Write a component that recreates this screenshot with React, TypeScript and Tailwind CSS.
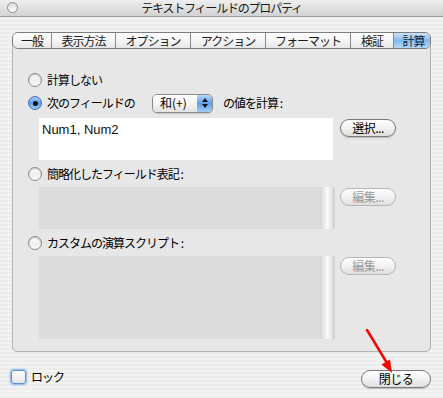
const jp = "font-['Noto_Sans_CJK_JP','Noto_Sans',sans-serif]"

const tabs = [
  { label: '一般', w: 'w-[38px]' },
  { label: '表示方法', w: 'w-[64px]' },
  { label: 'オプション', w: 'w-[75px]' },
  { label: 'アクション', w: 'w-[75px]' },
  { label: 'フォーマット', w: 'w-[85px]' },
  { label: '検証', w: 'w-[43px]' },
  { label: '計算', w: 'w-[40px]', active: true },
]

function Radio({ checked }: { checked?: boolean }) {
  return checked ? (
    <div className="flex h-[14px] w-[14px] shrink-0 items-center justify-center rounded-full border border-[#3f6fb0] bg-gradient-to-b from-[#a9cdf3] via-[#5f9fe6] to-[#9ccaf6]">
      <div className="h-[5px] w-[5px] rounded-full bg-[#111]" />
    </div>
  ) : (
    <div className="h-[14px] w-[14px] shrink-0 rounded-full border border-[#8a8a8a] bg-gradient-to-b from-[#ffffff] via-[#eeeeee] to-[#fafafa] shadow-[inset_0_1px_1px_rgba(0,0,0,0.25)]" />
  )
}

function PillButton({ label, disabled, w }: { label: string; disabled?: boolean; w: string }) {
  return (
    <div
      className={`flex h-[18px] ${w} items-center justify-center rounded-full border bg-gradient-to-b from-[#ffffff] via-[#f2f2f2] to-[#dedede] text-[12px] tracking-[-0.5px] ${
        disabled ? 'border-[#b5b5b5] text-[#9a9a9a]' : 'border-[#7a7a7a] text-black shadow-[0_1px_1px_rgba(0,0,0,0.2)]'
      }`}
    >
      {label}
    </div>
  )
}

export default function App() {
  return (
    <div className={`relative h-[398px] w-[443px] overflow-hidden ${jp}`}>
      {/* title bar */}
      <div className="relative flex h-[17px] items-center justify-center border-b border-[#9c9c9c] bg-gradient-to-b from-[#efefef] to-[#d2d2d2]">
        <div className="absolute left-[7px] top-[2px] h-[11px] w-[11px] rounded-full border border-[#8c8c8c] bg-gradient-to-b from-[#d8d8d8] to-[#ffffff]" />
        <span className="text-[12px] leading-none tracking-[-1.2px] text-[#1a1a1a]">テキストフィールドのプロパティ</span>
      </div>

      <div className="flex h-[381px] flex-col bg-[repeating-linear-gradient(0deg,#ececec_0px,#ececec_2px,#f3f3f3_2px,#f3f3f3_4px)] px-[12px] pt-[15px]">
        {/* tabs */}
        <div className="relative z-10 -mb-[8px] flex h-[17px] overflow-hidden rounded-[6px] border border-[#7d7d7d]">
          {tabs.map((t, i) => (
            <div
              key={t.label}
              className={`flex ${t.w} shrink-0 items-center justify-center text-[12px] leading-none tracking-[-1px] ${
                i > 0 ? 'border-l border-[#8a8a8a]' : ''
              } ${
                t.active
                  ? 'bg-gradient-to-b from-[#cfe3f8] via-[#86b9ee] to-[#b4d6f7] text-[#0b1d36]'
                  : 'bg-gradient-to-b from-[#ffffff] via-[#f5f5f5] to-[#e6e6e6] text-[#1a1a1a]'
              }`}
            >
              {t.label}
            </div>
          ))}
        </div>

        {/* panel */}
        <div className="flex h-[311px] w-[419px] flex-col rounded-[5px] border border-[#b3b3b3] bg-[#e7e7e7] pl-[15px]">
          <div className="mt-[31px] flex h-[14px] items-center gap-[5px]">
            <Radio />
            <span className="text-[12px] tracking-[-1px]">計算しない</span>
          </div>

          <div className="mt-[6px] flex h-[20px] items-center">
            <Radio checked />
            <span className="ml-[5px] w-[105px] text-[12px] tracking-[-1px]">次のフィールドの</span>
            <div className="flex h-[19px] w-[61px] overflow-hidden rounded-[5px] border border-[#8a8a8a] shadow-[0_1px_1px_rgba(0,0,0,0.15)]">
              <div className="flex flex-1 items-center bg-gradient-to-b from-[#ffffff] via-[#f4f4f4] to-[#e2e2e2] pl-[7px] text-[12px]">
                和(+)
              </div>
              <div className="flex w-[15px] flex-col items-center justify-center gap-[2px] bg-gradient-to-b from-[#b8d6f6] via-[#5f9fe6] to-[#a5ccf4]">
                <svg width="6" height="4" viewBox="0 0 6 4"><path d="M3 0 L6 4 L0 4 Z" fill="#111" /></svg>
                <svg width="6" height="4" viewBox="0 0 6 4"><path d="M0 0 L6 0 L3 4 Z" fill="#111" /></svg>
              </div>
            </div>
            <span className="ml-[10px] text-[12px] tracking-[-1px]">の値を計算 :</span>
          </div>

          <div className="mt-[5px] flex items-start">
            <div className="ml-[11px] h-[42px] w-[294px] bg-white px-[3px] pt-[2px] font-['Liberation_Sans',sans-serif] text-[13px] text-[#111]">
              Num1, Num2
            </div>
            <div className="ml-[7px] mt-[1px]">
              <PillButton label="選択..." w="w-[56px]" />
            </div>
          </div>

          <div className="mt-[7px] flex h-[14px] items-center gap-[5px]">
            <Radio />
            <span className="text-[12px] tracking-[-1px]">簡略化したフィールド表記 :</span>
          </div>

          <div className="mt-[6px] flex items-start">
            <div className="ml-[11px] flex h-[42px] w-[296px]">
              <div className="flex-1 bg-[#dcdcdc]" />
              <div className="w-[15px] bg-gradient-to-r from-[#d6d6d6] via-[#fbfbfb] to-[#cdcdcd]" />
            </div>
            <div className="ml-[5px] mt-[1px]">
              <PillButton label="編集..." w="w-[56px]" disabled />
            </div>
          </div>

          <div className="mt-[7px] flex h-[14px] items-center gap-[5px]">
            <Radio />
            <span className="text-[12px] tracking-[-1px]">カスタムの演算スクリプト :</span>
          </div>

          <div className="mt-[6px] flex items-start">
            <div className="ml-[11px] flex h-[83px] w-[296px]">
              <div className="flex-1 bg-[#dcdcdc]" />
              <div className="w-[15px] bg-gradient-to-r from-[#d6d6d6] via-[#fbfbfb] to-[#cdcdcd]" />
            </div>
            <div className="ml-[5px] mt-[1px]">
              <PillButton label="編集..." w="w-[56px]" disabled />
            </div>
          </div>
        </div>

        {/* footer */}
        <div className="mt-[16px] flex items-start justify-between">
          <div className="-ml-[1px] flex items-center gap-[5px]">
            <div className="h-[14px] w-[15px] rounded-[3px] border border-[#5d8fd0] bg-gradient-to-b from-[#ffffff] to-[#e4e4e4] shadow-[0_0_2px_1px_rgba(90,150,220,0.7)]" />
            <span className="text-[12px] tracking-[-1px]">ロック</span>
          </div>
          <div className="mt-[2px]">
            <PillButton label="閉じる" w="w-[70px]" />
          </div>
        </div>
      </div>

      {/* red annotation arrow */}
      <svg className="absolute left-0 top-0" width="443" height="398" viewBox="0 0 443 398">
        <line x1="367" y1="330" x2="387" y2="363" stroke="#ff0000" strokeWidth="2.5" strokeLinecap="round" />
        <path d="M392 373 L381.5 364.5 L390 359.5 Z" fill="#ff0000" />
      </svg>
    </div>
  )
}
